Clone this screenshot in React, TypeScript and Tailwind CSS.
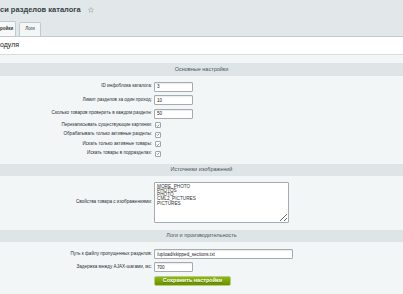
import React from "react"

const labelCls = "text-right text-[4.6px] leading-none text-[#2a2f33] pr-[2px] whitespace-nowrap"
const inputCls =
  "h-[10px] border border-[#a4acb1] rounded-[1px] bg-white text-[4.6px] leading-none text-[#222] px-[2px] outline-none shadow-[inset_0_1px_1px_rgba(0,0,0,0.08)]"

function SectionHead({ title, h }: { title: string; h: string }) {
  return (
    <div className={`${h} bg-[#dfe5e7] flex items-center justify-center text-[5.5px] not-italic text-[#4a545a]`}>
      {title}
    </div>
  )
}

function Check() {
  return (
    <span className="w-[6px] h-[6px] border border-[#9ca5a9] bg-white rounded-[1px] flex items-center justify-center">
      <svg viewBox="0 0 8 8" className="w-[5px] h-[5px]">
        <path d="M1.5 4.2 L3.3 6 L6.6 2" stroke="#4d565b" strokeWidth="1.2" fill="none" />
      </svg>
    </span>
  )
}

function InputRow({ label, value, w }: { label: string; value: string; w: string }) {
  return (
    <div className="grid grid-cols-[154px_1fr] items-center h-[13.5px]">
      <div className={labelCls}>{label}</div>
      <input readOnly spellCheck={false} value={value} className={`${inputCls} ${w}`} />
    </div>
  )
}

function CheckRow({ label }: { label: string }) {
  return (
    <div className="grid grid-cols-[155px_1fr] items-center h-[9.5px]">
      <div className={labelCls + " pr-[3px]"}>{label}</div>
      <Check />
    </div>
  )
}

export default function App() {
  return (
    <div className="w-[403px] h-[294px] overflow-hidden bg-[#f3f6f7] font-['Liberation_Sans',Arial,sans-serif] text-[#222]">
      {/* Title and tabs */}
      <div className="h-[37px] bg-[#e2e8ea] border-b border-[#c3cacd] flex flex-col">
        <div className="h-[21px] flex items-start pt-[5px] gap-[7px]">
          <h1 className="text-[7.5px] font-bold leading-[9px] text-[#363f44]">си разделов каталога</h1>
          <svg viewBox="0 0 10 10" className="w-[6px] h-[6px] mt-[2px]">
            <path
              d="M5 0.8 L6.2 3.6 L9.2 3.8 L6.9 5.8 L7.6 8.8 L5 7.2 L2.4 8.8 L3.1 5.8 L0.8 3.8 L3.8 3.6 Z"
              fill="none"
              stroke="#9aa3a7"
              strokeWidth="0.9"
            />
          </svg>
        </div>
        <div className="flex items-end gap-[3px] h-[15px]">
          <div className="h-[15px] w-[16px] bg-[#f7f9f9] border-r border-t border-[#c3cacd] rounded-tr-[2px] flex items-center text-[4.5px] font-bold text-[#333]">
            ройки
          </div>
          <div className="h-[14px] w-[22px] bg-[#f3f6f7] border border-b-0 border-[#c3cacd] rounded-t-[2px] flex items-center justify-center text-[4.5px] not-italic text-[#333]">
            Логи
          </div>
        </div>
      </div>

      {/* Module heading */}
      <div className="h-[18px] bg-white border-b border-[#d6dbdd] flex items-center text-[7px] text-[#222]">
        одуля
      </div>
      <div className="h-[8px]" />

      {/* Main settings */}
      <SectionHead title="Основные настройки" h="h-[13px]" />
      <div className="pt-[4px] pb-[5px]">
        <InputRow label="ID инфоблока каталога:" value="3" w="w-[39px]" />
        <InputRow label="Лимит разделов за один проход:" value="10" w="w-[39px]" />
        <InputRow label="Сколько товаров проверить в каждом разделе:" value="50" w="w-[39px]" />
        <CheckRow label="Перезаписывать существующие картинки:" />
        <CheckRow label="Обрабатывать только активные разделы:" />
        <CheckRow label="Искать только активные товары:" />
        <CheckRow label="Искать товары в подразделах:" />
      </div>

      {/* Image sources */}
      <SectionHead title="Источники изображений" h="h-[12px]" />
      <div className="pt-[6px] pb-[7px] grid grid-cols-[154px_1fr] items-center">
        <div className={labelCls}>Свойства товара с изображениями:</div>
        <textarea
          readOnly
          spellCheck={false}
          defaultValue={"MORE_PHOTO\nPHOTOS\nPHOTO\nCML2_PICTURES\nPICTURES"}
          className="w-[135px] h-[41px] border border-[#a4acb1] rounded-[1px] bg-white text-[4.7px] leading-[4.3px] text-[#333] px-[2px] py-[2px] outline-none"
        />
      </div>

      {/* Logs */}
      <SectionHead title="Логи и производительность" h="h-[12px]" />
      <div className="pt-[6px]">
        <div className="grid grid-cols-[154px_1fr] items-center h-[13px]">
          <div className={labelCls}>Путь к файлу пропущенных разделов:</div>
          <input
            readOnly
            spellCheck={false}
            value="/upload/skipped_sections.txt"
            className={`${inputCls} w-[139px]`}
          />
        </div>
        <InputRow label="Задержка между AJAX-шагами, мс:" value="700" w="w-[39px]" />
        <div className="grid grid-cols-[154px_1fr] mt-[1.5px]">
          <div />
          <button className="w-[77px] h-[10px] rounded-[2px] border border-[#b6cf7a] bg-gradient-to-b from-[#91b814] to-[#6a8f00] text-white font-bold text-[5.5px] leading-none [text-shadow:0_1px_0_rgba(0,0,0,0.25)]">
            Сохранить настройки
          </button>
        </div>
      </div>
    </div>
  )
}
